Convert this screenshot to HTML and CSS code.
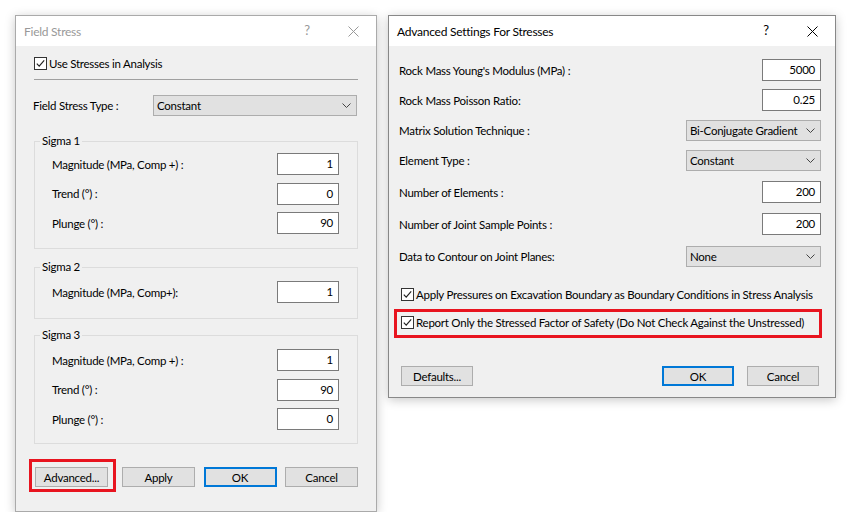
FILE: index.html
```html
<!DOCTYPE html>
<html>
<head>
<meta charset="utf-8">
<link rel="stylesheet" href="styles.css">
</head>
<body>
<div class="desk">
  <div class="dlg inactive left">
    <div class="titlebar">
      <span class="ttl">Field Stress</span>
      <span class="tbtn q">?</span>
      <span class="tbtn"><svg width="11" height="11" viewBox="0 0 11 11"><path d="M0.5 0.5L10.5 10.5M10.5 0.5L0.5 10.5" class="xp"/></svg></span>
    </div>
    <div class="body lbody">
      <div class="chk-row">
        <span class="chk"><svg width="13" height="13" viewBox="0 0 13 13"><rect x="0.5" y="0.5" width="12" height="12" fill="#fff" stroke="#333"/><path d="M2.8 6.6L5.2 9.1L10.2 3.4" fill="none" stroke="#222" stroke-width="1.2"/></svg></span>
        <span>Use Stresses in Analysis</span>
      </div>
      <div class="sep"></div>
      <div class="type-row">
        <span class="type-label">Field Stress Type :</span>
        <div class="combo cwide"><span>Constant</span><svg width="9" height="5" viewBox="0 0 9 5"><path d="M0.5 0.5L4.5 4.5L8.5 0.5" fill="none" stroke="#444"/></svg></div>
      </div>
      <fieldset class="grp g1">
        <legend>Sigma 1</legend>
        <div class="gbody">
          <div class="frow"><span>Magnitude (MPa, Comp +) :</span><div class="num">1</div></div>
          <div class="frow"><span>Trend (°) :</span><div class="num">0</div></div>
          <div class="frow"><span>Plunge (°) :</span><div class="num">90</div></div>
        </div>
      </fieldset>
      <fieldset class="grp g2">
        <legend>Sigma 2</legend>
        <div class="gbody">
          <div class="frow"><span>Magnitude (MPa, Comp+):</span><div class="num">1</div></div>
        </div>
      </fieldset>
      <fieldset class="grp g3">
        <legend>Sigma 3</legend>
        <div class="gbody">
          <div class="frow"><span>Magnitude (MPa, Comp +) :</span><div class="num">1</div></div>
          <div class="frow"><span>Trend (°) :</span><div class="num">90</div></div>
          <div class="frow"><span>Plunge (°) :</span><div class="num">0</div></div>
        </div>
      </fieldset>
      <div class="btns lbtns">
        <div class="btn adv marked">Advanced...</div>
        <div class="btn apply">Apply</div>
        <div class="btn ok">OK</div>
        <div class="btn cancel">Cancel</div>
      </div>
    </div>
  </div>

  <div class="dlg active right">
    <div class="titlebar">
      <span class="ttl">Advanced Settings For Stresses</span>
      <span class="tbtn q">?</span>
      <span class="tbtn"><svg width="11" height="11" viewBox="0 0 11 11"><path d="M0.5 0.5L10.5 10.5M10.5 0.5L0.5 10.5" class="xp"/></svg></span>
    </div>
    <div class="body rbody">
      <div class="arow r1"><span>Rock Mass Young's Modulus (MPa) :</span><div class="num rnum">5000</div></div>
      <div class="arow"><span>Rock Mass Poisson Ratio:</span><div class="num rnum">0.25</div></div>
      <div class="arow"><span>Matrix Solution Technique :</span><div class="combo cnarrow"><span>Bi-Conjugate Gradient</span><svg width="9" height="5" viewBox="0 0 9 5"><path d="M0.5 0.5L4.5 4.5L8.5 0.5" fill="none" stroke="#444"/></svg></div></div>
      <div class="arow"><span>Element Type :</span><div class="combo cnarrow"><span>Constant</span><svg width="9" height="5" viewBox="0 0 9 5"><path d="M0.5 0.5L4.5 4.5L8.5 0.5" fill="none" stroke="#444"/></svg></div></div>
      <div class="arow wide"><span>Number of Elements :</span><div class="num rnum">200</div></div>
      <div class="arow wide"><span>Number of Joint Sample Points :</span><div class="num rnum">200</div></div>
      <div class="arow wide"><span>Data to Contour on Joint Planes:</span><div class="combo cnarrow"><span>None</span><svg width="9" height="5" viewBox="0 0 9 5"><path d="M0.5 0.5L4.5 4.5L8.5 0.5" fill="none" stroke="#444"/></svg></div></div>
      <div class="chk-row rc1">
        <span class="chk"><svg width="13" height="13" viewBox="0 0 13 13"><rect x="0.5" y="0.5" width="12" height="12" fill="#fff" stroke="#333"/><path d="M2.8 6.6L5.2 9.1L10.2 3.4" fill="none" stroke="#222" stroke-width="1.2"/></svg></span>
        <span>Apply Pressures on Excavation Boundary as Boundary Conditions in Stress Analysis</span>
      </div>
      <div class="chk-row rc2 marked2">
        <span class="chk"><svg width="13" height="13" viewBox="0 0 13 13"><rect x="0.5" y="0.5" width="12" height="12" fill="#fff" stroke="#333"/><path d="M2.8 6.6L5.2 9.1L10.2 3.4" fill="none" stroke="#222" stroke-width="1.2"/></svg></span>
        <span>Report Only the Stressed Factor of Safety (Do Not Check Against the Unstressed)</span>
      </div>
      <div class="btns rbtns">
        <div class="btn defaults">Defaults...</div>
        <div class="btn ok rok">OK</div>
        <div class="btn rcancel">Cancel</div>
      </div>
    </div>
  </div>
</div>
</body>
</html>
```

FILE: styles.css
```css
* { box-sizing: border-box; }
html, body { margin: 0; padding: 0; background: #fff; }
body {
  font-family: "Lato", "Noto Sans", sans-serif;
  font-size: 11.5px;
  letter-spacing: -0.25px;
  line-height: 15px;
  color: #000;
  white-space: nowrap;
}
.desk {
  display: flex;
  align-items: flex-start;
  gap: 11px;
  padding: 15px 0 0 15px;
}
.dlg {
  display: flex;
  flex-direction: column;
  background: #f0f0f0;
  box-shadow: 0 2px 10px rgba(0,0,0,0.22);
}
.left { width: 362px; height: 497px; border: 1px solid #aaaaaa; }
.right { width: 448px; height: 383px; border: 1px solid #888888; }
.titlebar {
  height: 30px;
  flex: none;
  display: flex;
  align-items: center;
  background: #fff;
}
.ttl { flex: 1; padding-left: 8px; font-size: 12px; }
.inactive .ttl { color: #999; }
.tbtn {
  width: 46px;
  height: 30px;
  display: flex;
  align-items: center;
  justify-content: center;
}
.q { font-size: 13px; padding-bottom: 1px; }
.inactive .q { color: #999; }
.xp { stroke: #000; stroke-width: 1; fill: none; }
.inactive .xp { stroke: #999; }
.body { flex: 1; display: flex; flex-direction: column; }
.lbody { padding: 0 18px; }
.chk-row { display: flex; align-items: center; height: 15px; }
.chk { width: 13px; height: 13px; margin-right: 2px; display: flex; flex: none; }
.lbody .chk-row { margin-top: 10px; }
.sep { margin-top: 8px; height: 1px; background: #a0a0a0; }
.type-row { margin-top: 15px; display: flex; align-items: center; height: 21px; }
.type-label { width: 120px; margin-left: -1px; padding-right: 1px; }
.combo {
  height: 21px;
  display: flex;
  align-items: center;
  justify-content: space-between;
  background: #e1e1e1;
  border: 1px solid #adadad;
  padding: 0 5px 0 3px;
}
.combo svg { display: block; }
.cwide { width: 204px; }
.cnarrow { width: 135px; }
.grp {
  margin: 0;
  padding: 0;
  border: 1px solid #dcdcdc;
  min-width: 0;
}
.grp legend {
  padding: 0 2px;
  margin-left: 5px;
  line-height: 16px;
}
.g1 { margin-top: 17px; }
.g2 { margin-top: 10px; }
.g3 { margin-top: 8px; }
.gbody {
  display: flex;
  flex-direction: column;
  gap: 7.5px;
  padding: 4px 18px 14px 17px;
}
.g2 .gbody { padding: 6px 18px 15px 17px; }
.g3 .gbody { padding: 6px 18px 13px 17px; }
.frow { display: flex; align-items: center; justify-content: space-between; height: 22px; }
.num {
  width: 62px;
  height: 22px;
  background: #fff;
  border: 1px solid #7a7a7a;
  text-align: right;
  padding: 2px 5px 0 0;
}
.btns { display: flex; align-items: center; }
.btn {
  width: 73px;
  height: 20px;
  background: #e1e1e1;
  border: 1px solid #adadad;
  display: flex;
  align-items: center;
  justify-content: center;
}
.btn.ok { border: 2px solid #0078d7; }
.lbtns { margin-top: 23px; }
.adv { margin-left: 1px; }
.apply { margin-left: 14px; }
.lbtns .ok { margin-left: 8.5px; }
.cancel { margin-left: 8.5px; }
.marked { position: relative; }
.marked::after {
  content: "";
  position: absolute;
  left: -7px; right: -9px; top: -9px; bottom: -6px;
  border: 3px solid #e8141f;
}
.rbody { padding: 0 14px 0 10px; }
.arow { display: flex; align-items: center; justify-content: space-between; height: 22px; margin-top: 8px; }
.arow.r1 { margin-top: 13px; }
.arow.wide { margin-top: 10px; }
.rnum { width: 59px; }
.rbody .chk { margin-left: 2px; }
.rc1 { margin-top: 20px; }
.rc2 { margin-top: 13px; }
.marked2 { position: relative; }
.marked2::after {
  content: "";
  position: absolute;
  left: -5px; right: -1px; top: -6px; bottom: -8px;
  border: 3px solid #e8141f;
}
.rbtns { margin-top: 36px; }
.defaults { width: 72px; margin-left: 2px; }
.rok { width: 72px; margin-left: auto; }
.rcancel { width: 72px; margin-left: 13px; margin-right: 2px; }
```
